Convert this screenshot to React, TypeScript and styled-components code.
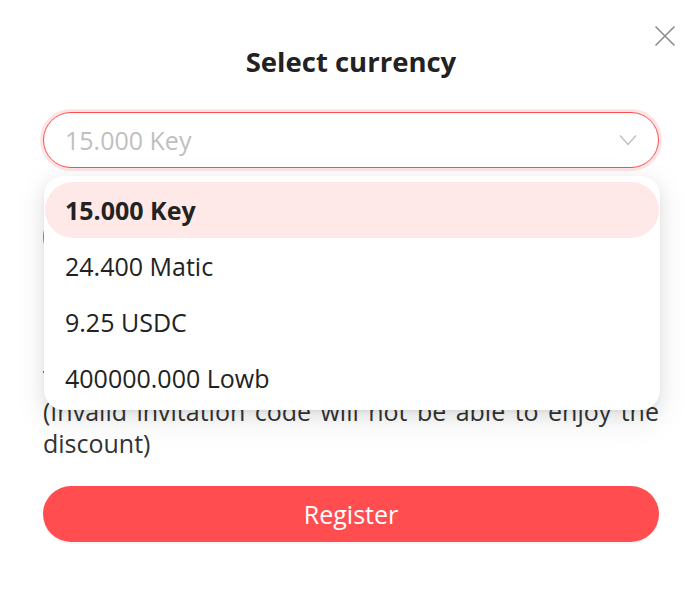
import React from "react";
import styled, { createGlobalStyle } from "styled-components";

const Global = createGlobalStyle`
  html, body { margin: 0; padding: 0; background: #ffffff; }
  body { font-family: "Open Sans", "Noto Sans", sans-serif; color: #222; }
  * { box-sizing: border-box; }
`;

const Modal = styled.div`
  position: relative;
  width: 698px;
  height: 592px;
  background: #fff;
  padding: 40px 39px 0 43px;
  display: flex;
  flex-direction: column;
`;

const CloseButton = styled.button`
  position: absolute;
  top: 24px;
  right: 21px;
  width: 24px;
  height: 24px;
  padding: 0;
  border: none;
  background: transparent;
  display: flex;
  align-items: center;
  justify-content: center;
  cursor: pointer;
`;

const Title = styled.h2`
  margin: 0;
  text-align: center;
  font-size: 27.5px;
  font-weight: 700;
  line-height: 44px;
  color: #222;
`;

const Form = styled.div`
  margin-top: 28px;
  display: flex;
  flex-direction: column;
`;

const SelectWrap = styled.div`
  position: relative;
  z-index: 2;
`;

const SelectBox = styled.div`
  height: 56px;
  border: 1px solid #ff4d4f;
  border-radius: 28px;
  box-shadow: 0 0 0 3px rgba(255, 77, 79, 0.15);
  display: flex;
  align-items: center;
  justify-content: space-between;
  padding: 0 21px 0 21px;
  background: #fff;
`;

const Placeholder = styled.span`
  font-size: 25px;
  color: #bfbfbf;
`;

const Dropdown = styled.ul`
  position: absolute;
  top: 64px;
  left: 1px;
  width: 616px;
  margin: 0;
  padding: 6px 1px 4px;
  list-style: none;
  background: #fff;
  border-radius: 20px;
  box-shadow: 0 6px 16px 0 rgba(0, 0, 0, 0.08), 0 3px 6px -4px rgba(0, 0, 0, 0.12),
    0 9px 28px 8px rgba(0, 0, 0, 0.05);
`;

const Option = styled.li<{ $active?: boolean }>`
  height: 56px;
  display: flex;
  align-items: center;
  padding: 0 20px;
  border-radius: 28px;
  font-size: 25px;
  color: #222;
  font-weight: ${(p) => (p.$active ? 700 : 400)};
  background: ${(p) => (p.$active ? "#ffe8e8" : "transparent")};
`;

const CodeInput = styled.div`
  margin-top: 41px;
  height: 56px;
  border: 1px solid #ff4d4f;
  border-radius: 28px;
  background: #fff;
`;

const Note = styled.p`
  margin: 98px 0 0;
  font-size: 25px;
  line-height: 32px;
  color: #333;
  text-align: justify;
`;

const RegisterButton = styled.button`
  margin-top: 27px;
  height: 56px;
  border: none;
  border-radius: 28px;
  background: #ff4d50;
  color: #fff;
  font-family: inherit;
  font-size: 25px;
  box-shadow: 0 2px 0 rgba(0, 0, 0, 0.04);
  cursor: pointer;
`;

const options = ["15.000 Key", "24.400 Matic", "9.25 USDC", "400000.000 Lowb"];

export default function App() {
  return (
    <>
      <Global />
      <Modal>
        <CloseButton aria-label="close">
          <svg width="22" height="22" viewBox="0 0 22 22" fill="none">
            <path d="M1.5 1.5 L20.5 20.5 M20.5 1.5 L1.5 20.5" stroke="#8c8c8c" strokeWidth="1.6" />
          </svg>
        </CloseButton>
        <Title>Select currency</Title>
        <Form>
          <SelectWrap>
            <SelectBox>
              <Placeholder>15.000 Key</Placeholder>
              <svg width="18" height="12" viewBox="0 0 18 12" fill="none">
                <path d="M1 1.5 L9 10.5 L17 1.5" stroke="#bfbfbf" strokeWidth="1.4" />
              </svg>
            </SelectBox>
            <Dropdown>
              {options.map((o, i) => (
                <Option key={o} $active={i === 0}>
                  {o}
                </Option>
              ))}
            </Dropdown>
          </SelectWrap>
          <CodeInput />
          <Note>
            Valid invitation code will enjoy the discount
            <br />
            (Invalid invitation code will not be able to enjoy the discount)
          </Note>
          <RegisterButton>Register</RegisterButton>
        </Form>
      </Modal>
    </>
  );
}
